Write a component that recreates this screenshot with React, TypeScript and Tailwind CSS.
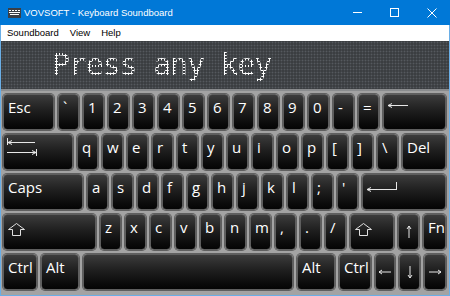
import React from 'react';

type K = { l?: React.ReactNode; w: string; center?: boolean };

const FONT = { fontFamily: '"Open Sans", "Noto Sans", sans-serif' } as const;
const UI = { fontFamily: '"Liberation Sans", Arial, sans-serif' } as const;

function TabIcon() {
  return (
    <svg width="32" height="18" viewBox="0 0 32 18" fill="none" stroke="#e8e8e8" strokeWidth="1">
      <line x1="0.5" y1="0" x2="0.5" y2="7" />
      <line x1="1" y1="4.5" x2="28" y2="4.5" />
      <polyline points="5,2.5 1,4.5 5,6.5" />
      <line x1="0" y1="14.5" x2="29" y2="14.5" />
      <polyline points="25,12.5 29,14.5 25,16.5" />
      <line x1="29.5" y1="11" x2="29.5" y2="18" />
    </svg>
  );
}

function BackIcon() {
  return (
    <svg width="22" height="8" viewBox="0 0 22 8" fill="none" stroke="#e8e8e8" strokeWidth="1">
      <line x1="1" y1="3.5" x2="21" y2="3.5" />
      <polyline points="5,1.5 1,3.5 5,5.5" />
    </svg>
  );
}

function EnterIcon() {
  return (
    <svg width="32" height="12" viewBox="0 0 32 12" fill="none" stroke="#e8e8e8" strokeWidth="1">
      <line x1="1" y1="9.5" x2="30" y2="9.5" />
      <polyline points="5,7.5 1,9.5 5,11.5" />
      <line x1="30.5" y1="2" x2="30.5" y2="10" />
    </svg>
  );
}

function ShiftIcon() {
  return (
    <svg width="18" height="13" viewBox="0 0 18 13" fill="none" stroke="#e0e0e0" strokeWidth="1">
      <polygon points="8.5,0.5 16.5,6.5 12.5,6.5 12.5,12.5 4.5,12.5 4.5,6.5 0.5,6.5" />
    </svg>
  );
}

function Arrow({ dir }: { dir: 'up' | 'down' | 'left' | 'right' }) {
  const rot = { up: 0, right: 90, down: 180, left: 270 }[dir];
  return (
    <svg width="14" height="14" viewBox="0 0 14 14" fill="none" stroke="#e8e8e8" strokeWidth="1" style={{ transform: `rotate(${rot}deg)` }}>
      <line x1="7" y1="1" x2="7" y2="13" />
      <polyline points="5,4 7,1 9,4" />
    </svg>
  );
}

function Key({ k }: { k: K }) {
  return (
    <div
      className={`${k.w} h-[36px] shrink-0 rounded-[4px] border border-[#5e5e5e] bg-linear-to-b from-[#3c3c3c] via-[#1c1c1c] to-[#050505] shadow-[0_0_0_1px_rgba(40,40,40,0.55)] text-white text-[15px] leading-[15px] flex ${
        k.center ? 'items-center justify-center' : 'items-start justify-start pl-[3px] pt-[5px]'
      }`}
      style={FONT}
    >
      {k.l}
    </div>
  );
}

const t = (s: string) => <span className="pl-[1px]">{s}</span>;

const rows: K[][] = [
  [
    { l: t('Esc'), w: 'w-[51px]' },
    { l: t('`'), w: 'w-[21px]' },
    { l: t('1'), w: 'w-[21px]' },
    { l: t('2'), w: 'w-[21px]' },
    { l: t('3'), w: 'w-[21px]' },
    { l: t('4'), w: 'w-[21px]' },
    { l: t('5'), w: 'w-[21px]' },
    { l: t('6'), w: 'w-[21px]' },
    { l: t('7'), w: 'w-[21px]' },
    { l: t('8'), w: 'w-[21px]' },
    { l: t('9'), w: 'w-[21px]' },
    { l: t('0'), w: 'w-[21px]' },
    { l: t('-'), w: 'w-[21px]' },
    { l: t('='), w: 'w-[21px]' },
    { l: <div className="pt-[2px]"><BackIcon /></div>, w: 'w-[63px]' },
  ],
  [
    { l: <div className="-mt-[2px]"><TabIcon /></div>, w: 'w-[70px]' },
    ...'qwertyuiop[]\\'.split('').map((c) => ({ l: t(c), w: 'w-[21px]' })),
    { l: t('Del'), w: 'w-[44px]' },
  ],
  [
    { l: t('Caps'), w: 'w-[80px]' },
    ...'asdfghjkl;\''.split('').map((c) => ({ l: t(c), w: 'w-[21px]' })),
    { l: <div className="pt-[0px]"><EnterIcon /></div>, w: 'w-[84px]' },
  ],
  [
    { l: <div className="pt-[3px] pl-[1px]"><ShiftIcon /></div>, w: 'w-[93px]' },
    ...'zxcvbnm,./'.split('').map((c) => ({ l: t(c), w: 'w-[21px]' })),
    { l: <div className="pt-[3px] pl-[1px]"><ShiftIcon /></div>, w: 'w-[44px]' },
    { l: <Arrow dir="up" />, w: 'w-[21px]', center: true },
    { l: t('Fn'), w: 'w-[23px]' },
  ],
  [
    { l: t('Ctrl'), w: 'w-[34px]' },
    { l: t('Alt'), w: 'w-[38px]' },
    { l: null, w: 'w-[210px]' },
    { l: t('Alt'), w: 'w-[38px]' },
    { l: t('Ctrl'), w: 'w-[32px]' },
    { l: <Arrow dir="left" />, w: 'w-[20px]', center: true },
    { l: <Arrow dir="down" />, w: 'w-[21px]', center: true },
    { l: <Arrow dir="right" />, w: 'w-[22px]', center: true },
  ],
];

export default function App() {
  return (
    <div className="w-[450px] h-[296px] overflow-hidden flex flex-col bg-[#0078d7]" style={UI}>
      {/* Title bar */}
      <div className="h-[25px] shrink-0 flex items-center text-white">
        <div className="pl-[8px] pr-[3px] flex items-center">
          <svg width="13" height="10" viewBox="0 0 13 10">
            <rect x="0" y="0" width="13" height="10" fill="#3b3f46" />
            <rect x="1" y="2" width="2" height="1" fill="#fff" />
            <rect x="4" y="2" width="2" height="1" fill="#fff" />
            <rect x="7" y="2" width="2" height="1" fill="#fff" />
            <rect x="10" y="2" width="2" height="1" fill="#fff" />
            <rect x="1" y="4" width="11" height="1" fill="#fff" />
            <rect x="2" y="6" width="9" height="1" fill="#fff" />
          </svg>
        </div>
        <div className="text-[9.5px] leading-none flex-1">VOVSOFT - Keyboard Soundboard</div>
        <div className="flex h-full">
          <div className="w-[36px] flex items-center justify-center">
            <div className="w-[9px] h-px bg-white" />
          </div>
          <div className="w-[38px] flex items-center justify-center">
            <div className="w-[9px] h-[9px] border border-white" />
          </div>
          <div className="w-[37px] flex items-center justify-center">
            <svg width="10" height="10" viewBox="0 0 10 10" stroke="#fff" strokeWidth="1">
              <line x1="0.5" y1="0.5" x2="9.5" y2="9.5" />
              <line x1="9.5" y1="0.5" x2="0.5" y2="9.5" />
            </svg>
          </div>
        </div>
      </div>
      <div className="flex-1 flex flex-col bg-[#a3a3a3] border-x border-b border-[#6aaee6]">
        {/* Menu */}
        <div className="h-[16px] shrink-0 bg-white flex items-center gap-[11px] pl-[6px] text-[9.5px] text-black leading-none">
          <span>Soundboard</span>
          <span>View</span>
          <span>Help</span>
        </div>
        {/* Display */}
        <div className="h-[50px] shrink-0 bg-[#3b3e41] [background-image:radial-gradient(circle,#55595e_0.8px,transparent_1.1px)] [background-size:3px_3px] border-b-2 border-[#8a8c8e] flex items-start pl-[51px] pt-[7px]">
          <span
            className="text-[30px] leading-[34px] tracking-[-1.2px] text-transparent bg-clip-text [background-image:radial-gradient(circle,#ffffff_1px,transparent_1.4px)] [background-size:3px_3px]"
            style={{ fontFamily: '"DejaVu Sans Mono", monospace' }}
          >
            Press any key
          </span>
        </div>
        {/* Keyboard */}
        <div className="flex-1 flex flex-col gap-[4px] pl-[2px] pt-[3px]">
          {rows.map((r, i) => (
            <div key={i} className="flex gap-[4px]">
              {r.map((k, j) => (
                <Key key={j} k={k} />
              ))}
            </div>
          ))}
        </div>
      </div>
    </div>
  );
}
